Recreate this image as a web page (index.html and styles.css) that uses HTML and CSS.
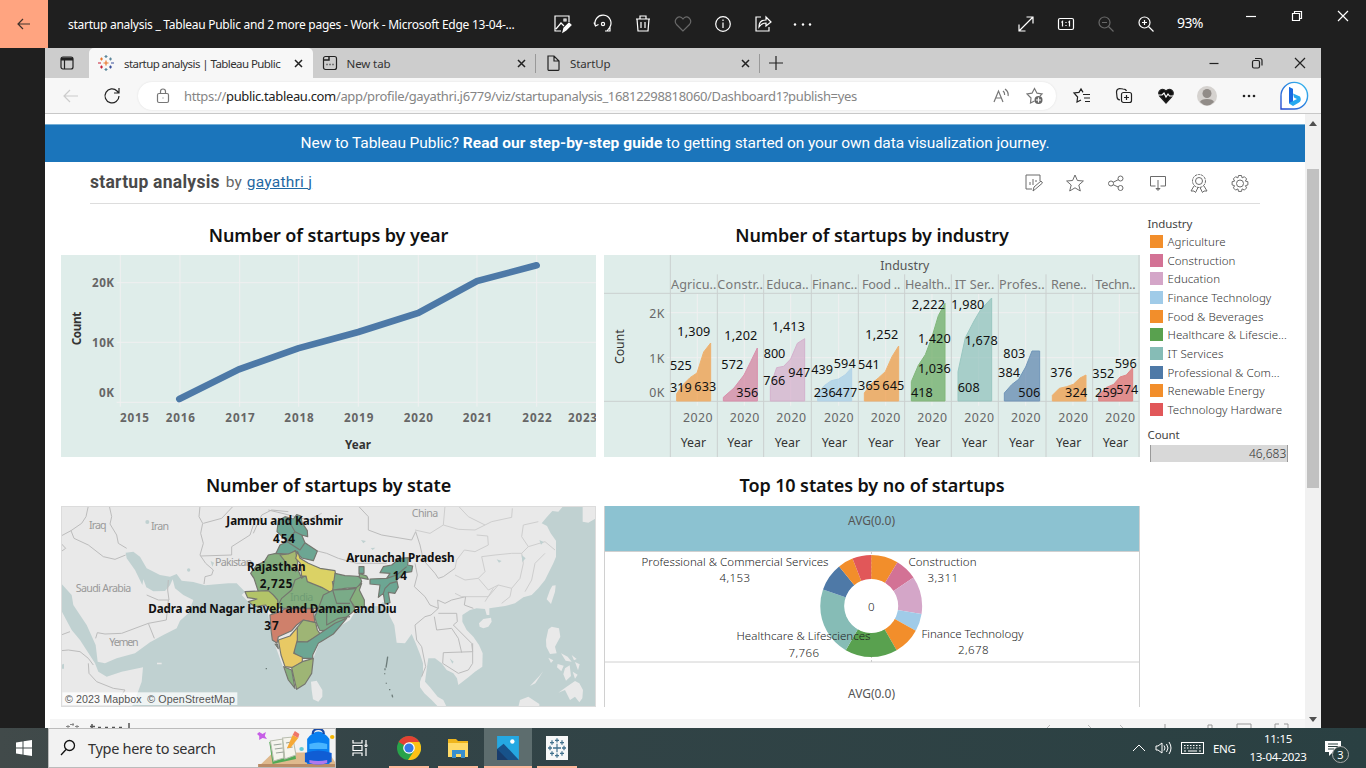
FILE: index.html
```html
<!DOCTYPE html>
<html lang="en">
<head>
<meta charset="utf-8">
<title>startup analysis</title>
<link rel="stylesheet" href="styles.css">
</head>
<body>
<header class="viewer">
  <div class="viewer-back"><svg width="14" height="12" viewBox="0 0 14 12"><path d="M13 6H1M6 1L1 6l5 5"/></svg></div>
  <div class="viewer-title">startup analysis _ Tableau Public and 2 more pages - Work - Microsoft Edge 13-04-...</div>
  <div class="viewer-tools">
    <svg viewBox="0 0 24 24"><path d="M10 19H4V4h14v6M5 17l5-6 3 3M13 7h2v2h-2z"/><path fill="#fff" d="M12 20l1-4 5-5 2 2-5 5z"/></svg>
    <svg viewBox="0 0 24 24"><circle cx="12" cy="12" r="1.600"/><path d="M4.500 14a8 8 0 1 1 14.500 1l-3 4M19 14v5h-5M3 10.500l1.500 3.500 3-1.500"/></svg>
    <svg viewBox="0 0 24 24"><path d="M5 7h14M9 7V4h6v3M6 7l1 12h10l1-12M10 10v6M14 10v6"/></svg>
    <svg class="dim" viewBox="0 0 24 24"><path d="M12 19L5.500 12.500C2 8 8 1.500 12 7c4-5.500 10 1 6.500 5.500z"/></svg>
    <svg viewBox="0 0 24 24"><circle cx="12" cy="12" r="7.300"/><path d="M12 10.500V16M12 7.500v1.500"/></svg>
    <svg viewBox="0 0 24 24"><path d="M10 5H5v14h13v-4M8 15c0-5 3-7 7-7V5l5 5-5 4v-3c-3 0-5 1-7 4z"/></svg>
    <svg class="solid" viewBox="0 0 24 24"><circle cx="4" cy="12.500" r="1.200"/><circle cx="12" cy="12.500" r="1.200"/><circle cx="19" cy="12.500" r="1.200"/></svg>
  </div>
  <div class="viewer-zoom">
    <svg viewBox="0 0 24 24"><path d="M5 19L19 5M12.500 5H19v6.500M5 12.500V19h6.500"/></svg>
    <svg viewBox="0 0 24 24"><rect x="4.500" y="6.500" width="15" height="11" rx="1.500"/><path d="M7.500 10.500l1-1v5M14.500 10.500l1-1v5M12 10v1M12 13v1"/></svg>
    <svg class="dim" viewBox="0 0 24 24"><circle cx="10.500" cy="10.500" r="5.500"/><path d="M14.500 14.500l5 5M8 10.500h5"/></svg>
    <svg viewBox="0 0 24 24"><circle cx="10.500" cy="10.500" r="5.500"/><path d="M14.500 14.500l5 5M8 10.500h5M10.500 8v5"/></svg>
  </div>
  <span class="percent">93%</span>
  <div class="viewer-win">
    <svg viewBox="0 0 12 12"><path d="M1 6.500h10"/></svg>
    <svg viewBox="0 0 12 12"><path d="M1.500 3.500h7v7h-7zM3.500 3V1.500h7v7H9"/></svg>
    <svg viewBox="0 0 12 12"><path d="M1 1l10 10M11 1L1 11"/></svg>
  </div>
</header>

<main class="shot">
  <div class="tabs">
    <div class="workspace"><svg width="14" height="14" viewBox="0 0 14 14"><rect x="1" y="1" width="12" height="12" rx="2"/><path d="M1 3h12" stroke-width="3"/><path d="M4.500 4v9"/></svg></div>
    <div class="tab active">
      <svg width="16" height="16" viewBox="0 0 16 16"><path stroke="#e8762c" d="M8 5.500v5M5.500 8h5M3.500 2.500v3M2 4h3"/><path stroke="#5b879b" d="M12.500 2.500v3M11 4h3M8 0v3M6.500 1.500h3M8 13v3M6.500 14.500h3"/><path stroke="#c72037" d="M3.500 10.500v3M2 12h3M0 8h3"/><path stroke="#384e9a" d="M12.500 10.500v3M11 12h3M13 8h3"/></svg>
      <span>startup analysis | Tableau Public</span>
      <svg class="x" width="9" height="9" viewBox="0 0 9 9"><path d="M1 1l7 7M8 1L1 8"/></svg>
    </div>
    <div class="tab">
      <svg width="16" height="16" viewBox="0 0 16 16"><rect x="1.500" y="1.500" width="13" height="13" rx="2"/><path d="M2 5h5V2M4.500 9.500h1M7.500 9.500h1M10.500 9.500h1" stroke-width="1.500"/></svg>
      <span>New tab</span>
      <svg class="x" width="9" height="9" viewBox="0 0 9 9"><path d="M1 1l7 7M8 1L1 8"/></svg>
    </div>
    <div class="tab">
      <svg width="16" height="16" viewBox="0 0 16 16"><path d="M3 1h6l5 5v8.500q0 .8-.8.800H3.600Q3 15.300 3 14.500zM9 1v5h5"/></svg>
      <span>StartUp</span>
      <svg class="x" width="9" height="9" viewBox="0 0 9 9"><path d="M1 1l7 7M8 1L1 8"/></svg>
    </div>
    <svg class="plus" width="14" height="14" viewBox="0 0 14 14"><path d="M7 0v14M0 7h14"/></svg>
    <div class="edge-win">
      <svg viewBox="0 0 12 12"><path d="M1.500 6.500h9"/></svg>
      <svg viewBox="0 0 12 12"><rect x="1.500" y="3.500" width="7" height="7.500" rx="1.500"/><path d="M4 1.500h5a2 2 0 0 1 2 2v5"/></svg>
      <svg viewBox="0 0 12 12"><path d="M1 1l10 10M11 1L1 11"/></svg>
    </div>
  </div>

  <div class="toolbar">
    <svg class="nav-back" width="16" height="16" viewBox="0 0 16 16"><path d="M15 8H1M7 2L1 8l6 6"/></svg>
    <svg class="nav-reload" width="18" height="18" viewBox="0 0 18 18"><path d="M16 9a7 7 0 1 1-2-5l2 2M16 1v5h-5"/></svg>
    <div class="address">
      <svg width="14" height="16" viewBox="0 0 14 16"><rect x="1.500" y="5.500" width="11" height="9" rx="1.500"/><path d="M4.500 5.500V3.500a2.500 2.500 0 0 1 5 0v2M6.500 10h1" /></svg>
      <span class="url">https://<b>public.tableau.com</b>/app/profile/gayathri.j6779/viz/startupanalysis_16812298818060/Dashboard1?publish=yes</span>
      <svg class="read" width="16" height="16" viewBox="0 0 16 16"><path d="M1 14L5.500 3 10 14M3 10h5M10 3q2 1.500 1.500 4M12 1q4 3 3 7"/></svg>
      <svg class="fav" width="18" height="18" viewBox="0 0 18 18"><path d="M8.500 14L4.500 16l.5-5-4-4 5-.8L8.500 1.500l2.500 4.700 5 .8-2 2"/><circle cx="12.500" cy="13" r="4" fill="#666" stroke="none"/><path stroke="#fff" d="M12.500 10.500v5M10 13h5"/></svg>
    </div>
    <div class="edge-tools">
      <svg viewBox="0 0 20 20"><path d="M9 14l-4 2 .6-5-3.600-4 5-.6L9 3l2 3.400M11 8.500h7M12 12h6M13 15.500h5"/></svg>
      <svg viewBox="0 0 20 20"><path d="M6 14q-3-.5-3-3L2.500 6q0-3 3-3.500L9 3q3 0 3.500 2"/><rect x="7.500" y="6.500" width="10" height="10" rx="2"/><path d="M12.500 9v5M10 11.500h5"/></svg>
      <svg viewBox="0 0 20 20"><path fill="#111" d="M10 17L3.500 10C1 5 6 1 10 5c4-4 9 0 6.500 5z"/><path stroke="#fff" d="M2 9h4l2-2 2 4 2-3 1.500 2H18"/></svg>
      <svg viewBox="0 0 20 20"><g stroke="none"><circle cx="10" cy="10" r="10" fill="#d5d2cf"/><circle cx="10" cy="7.500" r="4.500" fill="#918c88"/><path fill="#918c88" d="M3 16q1-3 7-3t7 3q-7 7-14 0"/></g></svg>
      <svg viewBox="0 0 20 20"><g stroke="none" fill="#222"><circle cx="5" cy="10" r="1.300"/><circle cx="10" cy="10" r="1.300"/><circle cx="15" cy="10" r="1.300"/></g></svg>
    </div>
    <svg class="bing" width="30" height="30" viewBox="0 0 30 30"><defs><linearGradient id="bg" x1="0" y1="1" x2="1" y2="0"><stop offset="0" stop-color="#2347d0"/><stop offset="1" stop-color="#37bff0"/></linearGradient></defs><path d="M2 28V15A13.300 13.300 0 1 1 15 28z" fill="#fff" stroke="url(#bg)" stroke-width="1.400"/><path d="M10 6l4 2v12l4-2-3-1.500-1-4 7 3q2 4-1 6l-6 3.500-4-2.500z" fill="#25a9f0" stroke="none"/><path d="M10 6l4 2v12l-4 2z" fill="#1a68e0" stroke="none"/></svg>
  </div>

  <div class="page">
    <div class="content">
      <div class="banner"><p>New to Tableau Public? <b>Read our step-by-step guide</b> to getting started on your own data visualization journey.</p></div>
      <div class="viz-head">
        <h1>startup analysis</h1><span class="by">by</span><a>gayathri j</a>
        <div class="viz-tools">
          <svg viewBox="0 0 24 24"><path d="M10 18H4V4h14v6M8 14v-3M11 14V8M14 11V9M11 20l1-4 7-6 1.500 2-7 6z"/></svg>
          <svg viewBox="0 0 24 24"><path d="M12 4l2.400 5.500 6 .5-4.600 4 1.500 6L12 16.800 6.700 20l1.500-6-4.600-4 6-.5z"/></svg>
          <svg viewBox="0 0 24 24"><circle cx="7" cy="12.500" r="2.500"/><circle cx="16.500" cy="7.500" r="2.500"/><circle cx="16.500" cy="17" r="2.500"/><path d="M9.200 11.300l5-2.600M9.200 13.700l5 2.300"/></svg>
          <svg viewBox="0 0 24 24"><path d="M9.500 15H4.500V5.500h15V15h-5M12 9v10M10 17.500l2 2 2-2z"/></svg>
          <svg viewBox="0 0 24 24"><circle cx="12" cy="10" r="6.500" stroke-dasharray="2.500 .7"/><circle cx="12" cy="10" r="3.500"/><path d="M7 15l-3 5h3l1.500 1.500L11 16.500M17 15l3 5h-3l-1.500 1.500L13 16.500"/></svg>
          <svg viewBox="0 0 24 24"><circle cx="12" cy="12.500" r="3.500"/><path d="M10.500 4.500h3l.6 2.400 2.300-1.200 2.200 2.200-1.200 2.200 2.500.6v3.200l-2.500.8 1.200 2.200-2.200 2.200-2.300-1.200-.6 2.500h-3l-.6-2.500-2.300 1.200-2.200-2.200 1.200-2.200-2.500-.8v-3.200l2.500-.6-1.200-2.200 2.200-2.200 2.300 1.200z"/></svg>
        </div>
      </div>

      <div class="dashboard">
        <section class="panel">
          <h2 class="t-year">Number of startups by year</h2>
          <svg class="chart" width="535" height="202" viewBox="33 120 1605 606">
            <rect x="33" y="120" width="1605" height="606" fill="#dfedea"/>
            <path class="grid" d="M200 203H1638M200 382H1638M200 562H1638M211 120V575M390 120V575M569 120V575M746 120V575M925 120V575M1105 120V575M1281 120V575M1460 120V575"/>
            <path d="M388 552L567 463L744 400L925 351L1105 294L1281 198L1460 151" fill="none" stroke="#4d79a7" stroke-width="20" stroke-linecap="round"/>
            <g class="tick bold">
              <text x="126" y="216" textLength="66">20K</text><text x="126" y="396" textLength="66">10K</text><text x="147" y="547" textLength="45">0K</text>
              <text x="210" y="620" textLength="87">2015</text><text x="347" y="620" textLength="88">2016</text><text x="526" y="620" textLength="88">2017</text><text x="703" y="620" textLength="88">2018</text><text x="882" y="620" textLength="88">2019</text><text x="1061" y="620" textLength="88">2020</text><text x="1238" y="620" textLength="88">2021</text><text x="1417" y="620" textLength="88">2022</text><text x="1554" y="620" textLength="87">2023</text>
            </g>
            <g class="axis bold"><text x="885" y="701" textLength="78">Year</text><text transform="translate(92 391) rotate(-90)" textLength="101">Count</text></g>
          </svg>
        </section>

        <section class="panel">
          <h2 class="t-industry">Number of startups by industry</h2>
          <svg class="chart" width="536" height="202" viewBox="12 120 1608 606">
            <rect x="12" y="120" width="1608" height="606" fill="#dfedea"/>
            <path class="grid" d="M200 293H1617M200 428H1617M292 237V572M433 237V572M572 237V572M716 237V572M857 237V572M996 237V572M1136 237V572M1277 237V572M1419 237V572M1558 237V572"/>
            <path class="rule" d="M12 235H1618M12 559H1618M211 120V726M352 178V726M491 178V726M634 178V726M775 178V726M914 178V726M1054 178V726M1195 178V726M1338 178V726M1478 178V726M1617 120V726"/>
            <g fill-opacity=".63" stroke-width="3">
              <path fill="#f28e2b" stroke="#eeb170" d="M230 558V536L250 508L270 488L291 474L311 411L332 384V558z"/>
              <path fill="#d37295" stroke="#d98fac" d="M370 558V547L402 519L432 480L452 440L472 399V558z"/>
              <path fill="#d4a6c8" stroke="#d4b1cd" d="M511 558V514L530 458L551 454L572 432L592 385L614 371V558z"/>
              <path fill="#a0cbe8" stroke="#b3d3e8" d="M653 558V534L674 511L694 497L716 492L736 479L755 458V558z"/>
              <path fill="#f28e2b" stroke="#eeb170" d="M793 558V534L813 507L835 489L856 470L876 425L896 393V558z"/>
              <path fill="#59a14f" stroke="#82b77b" d="M934 558V500L955 451L976 419L995 369L1015 302L1035 265V558z"/>
              <path fill="#86bcb6" stroke="#99c7c1" d="M1074 558V470L1096 368L1122 318L1142 284L1175 249V558z"/>
              <path fill="#4e79a7" stroke="#7196b9" d="M1213 558V534L1235 509L1256 493L1277 456L1296 408H1319V558z"/>
              <path fill="#f28e2b" stroke="#eeb170" d="M1357 558V541L1378 520L1400 515L1420 508L1440 489L1458 480V558z"/>
              <path fill="#e15759" stroke="#df8586" d="M1496 558V540L1518 518L1541 508L1560 486L1579 480L1598 458V558z"/>
            </g>
            <text class="axis soft" x="841" y="166" textLength="147">Industry</text>
            <g class="head">
              <text x="213" y="222" textLength="136">Agricu..</text><text x="352" y="222" textLength="137">Constr..</text><text x="499" y="222" textLength="127">Educa..</text><text x="636" y="222" textLength="136">Financ..</text><text x="786" y="222" textLength="115">Food ..</text><text x="915" y="222" textLength="137">Health..</text><text x="1064" y="222" textLength="119">IT Ser..</text><text x="1197" y="222" textLength="137">Profes..</text><text x="1353" y="222" textLength="107">Rene..</text><text x="1486" y="222" textLength="121">Techn..</text>
            </g>
            <g class="tick">
              <text x="148" y="309" textLength="45">2K</text><text x="148" y="444" textLength="45">1K</text><text x="148" y="547" textLength="45">0K</text>
              <text x="249" y="620" textLength="89">2020</text><text x="389" y="620" textLength="89">2020</text><text x="529" y="620" textLength="89">2020</text><text x="672" y="620" textLength="89">2020</text><text x="812" y="620" textLength="89">2020</text><text x="952" y="620" textLength="89">2020</text><text x="1093" y="620" textLength="89">2020</text><text x="1233" y="620" textLength="89">2020</text><text x="1375" y="620" textLength="89">2020</text><text x="1516" y="620" textLength="89">2020</text>
            </g>
            <g class="axis">
              <text transform="translate(73 447) rotate(-90)" textLength="104">Count</text>
              <text x="242" y="696" textLength="76">Year</text><text x="382" y="696" textLength="76">Year</text><text x="524" y="696" textLength="76">Year</text><text x="665" y="696" textLength="76">Year</text><text x="805" y="696" textLength="76">Year</text><text x="945" y="696" textLength="76">Year</text><text x="1085" y="696" textLength="76">Year</text><text x="1227" y="696" textLength="76">Year</text><text x="1368" y="696" textLength="76">Year</text><text x="1508" y="696" textLength="76">Year</text>
            </g>
            <g class="mark">
              <text x="232" y="362" textLength="99">1,309</text><text x="210" y="466" textLength="65">525</text><text x="210" y="530" textLength="65">319</text><text x="283" y="527" textLength="66">633</text>
              <text x="373" y="376" textLength="99">1,202</text><text x="364" y="461" textLength="66">572</text><text x="409" y="545" textLength="66">356</text>
              <text x="516" y="348" textLength="99">1,413</text><text x="491" y="430" textLength="65">800</text><text x="490" y="511" textLength="66">766</text><text x="565" y="486" textLength="66">947</text>
              <text x="634" y="477" textLength="65">439</text><text x="701" y="458" textLength="66">594</text><text x="641" y="545" textLength="66">236</text><text x="706" y="545" textLength="66">477</text>
              <text x="796" y="371" textLength="99">1,252</text><text x="774" y="463" textLength="65">541</text><text x="774" y="525" textLength="66">365</text><text x="847" y="525" textLength="66">645</text>
              <text x="935" y="282" textLength="100">2,222</text><text x="954" y="385" textLength="98">1,420</text><text x="954" y="474" textLength="98">1,036</text><text x="933" y="545" textLength="65">418</text>
              <text x="1054" y="282" textLength="99">1,980</text><text x="1094" y="391" textLength="99">1,678</text><text x="1073" y="530" textLength="66">608</text>
              <text x="1210" y="430" textLength="66">803</text><text x="1194" y="485" textLength="66">384</text><text x="1255" y="545" textLength="66">506</text>
              <text x="1351" y="486" textLength="66">376</text><text x="1395" y="545" textLength="67">324</text>
              <text x="1544" y="458" textLength="66">596</text><text x="1477" y="489" textLength="66">352</text><text x="1485" y="545" textLength="66">259</text><text x="1549" y="536" textLength="66">574</text>
            </g>
          </svg>
        </section>

        <aside class="legend">
          <h3>Industry</h3>
          <ul>
            <li><i class="c-or"></i><span>Agriculture</span></li>
            <li><i class="c-pk"></i><span>Construction</span></li>
            <li><i class="c-li"></i><span>Education</span></li>
            <li><i class="c-sk"></i><span>Finance Technology</span></li>
            <li><i class="c-or"></i><span>Food &amp; Beverages</span></li>
            <li><i class="c-gr"></i><span>Healthcare &amp; Lifescie...</span></li>
            <li><i class="c-te"></i><span>IT Services</span></li>
            <li><i class="c-bl"></i><span>Professional &amp; Com...</span></li>
            <li><i class="c-or"></i><span>Renewable Energy</span></li>
            <li><i class="c-rd"></i><span>Technology Hardware</span></li>
          </ul>
          <h3>Count</h3>
          <div class="count-bar">46,683</div>
        </aside>

        <section class="panel">
          <h2 class="t-state">Number of startups by state</h2>
          <svg class="chart" width="535" height="201" viewBox="18 18 1605 603">
            <rect x="18" y="18" width="1605" height="603" fill="#c0d1d1"/>
            <g fill="#e9e9e9">
              <path d="M18 18H1525L1510 35L1492 33L1475 52L1460 70L1476 78L1487 100L1503 122V150L1503 170L1495 190L1480 220L1470 240L1450 265L1430 285L1405 292L1380 310L1350 318L1303 325V345H1295L1290 327L1265 325L1245 330L1222 345V365L1235 390L1255 410L1272 435L1283 460L1282 500L1260 515L1240 532L1210 555L1206 535L1195 520L1175 510L1160 490L1140 475L1120 475L1116 500L1110 545L1125 562L1148 590L1165 600L1175 621H1150L1130 600L1108 580L1095 562V545L1104 520V490L1096 465L1082 430L1070 402L1050 430L1025 428L1018 375L1005 350L985 305L970 318L928 320L900 335L885 360L840 388L810 415L790 435L775 475L770 520L750 552L725 568L700 540L680 490L660 435L648 400L640 345L632 315L605 320L580 305L560 285L570 275L545 250L520 250L450 256L415 246L380 242L365 222L345 230L315 225L275 205L255 170L235 155L212 158L215 175L240 210L262 255L265 238L274 262L295 274L330 273L345 256L353 238L360 265L385 285L415 300L400 340L375 362L365 385L325 405L285 427L240 460L185 475L150 490L128 485L122 435L95 375L55 315L50 285L18 250z"/>
              <path d="M18 330L50 390L75 420L120 490L130 515L155 530L200 515L264 502L260 545L240 600L230 621H18zM1583 18V65L1600 68L1623 55V18zM768 545L785 542L802 570V590L790 605L774 598L770 570zM1272 370L1285 357L1308 353L1310 365L1300 380L1285 385L1274 380zM1485 270L1492 257L1502 256L1500 275L1488 312L1475 298zM1480 388L1490 380L1512 385L1516 410L1500 440L1505 460L1485 462L1474 440L1473 420zM1510 578L1535 560L1560 543L1573 550L1584 570L1582 595L1573 607L1560 590L1545 600L1530 570zM1390 621L1395 600L1420 590L1453 612V621z"/>
              <path d="M1518 460l20 10 12 15-18-3zM1550 465l15 12-8 4zM1508 492l18 5-7 17-13-12zM1530 505l14-9 4 32-15 14-8-19zM1560 486l14 7-5 18zM1553 515l15 9-8 12zM1425 558l28-30 12-15-24 37zM1480 473l15 8-7 8zM306 488h14v5h-14z"/>
            </g>
            <g fill="none" stroke="#bcbcbc" stroke-width="3">
              <path d="M100 18L93 50L80 70L48 92L18 108M48 92L57 115L100 135L145 170L180 178L212 165M163 18L170 50L165 72L185 105L190 130L215 145M435 18L432 50L443 70L437 100L445 130L435 165L452 190L475 210L470 225L450 230L447 252M437 168L530 165L530 140L585 105L600 60M445 70L500 55L535 18M340 240L338 270L342 300L310 300L275 285M340 300L334 360L280 370L200 400L150 402L127 398L122 415M280 370L298 415M18 155L32 145L18 130M18 405L45 395M18 452L40 450L75 455L100 475L115 495M100 490L102 520L125 545L175 565L210 570L190 600L230 612M700 35L650 30L620 45L595 100M787 153L815 160L850 175L905 190L995 190M640 30L690 42L760 60L800 40M910 18L940 50V90L980 105L1070 120L1082 95L1095 135L1105 180L1140 220L1150 235L1165 230L1200 205M1080 190L1087 225L1078 260L1110 290L1125 315L1150 325L1128 345L1110 350L1080 375L1085 420L1100 440L1112 500L1100 530M1150 325L1148 300L1170 310L1190 300L1232 290L1228 315L1255 325M1150 340L1205 340L1207 365L1195 375L1250 430L1253 455L1165 458L1163 490L1210 520L1240 510L1253 490V430M1138 350L1145 390L1190 385L1210 415L1220 458"/>
              <path stroke="#cecece" d="M1080 90L1125 100L1165 75L1170 18M1165 75L1210 88L1260 90L1290 75L1240 50L1210 18M1290 75L1310 65L1370 52L1372 25M1200 205L1205 180L1228 150L1260 155L1300 135L1298 108L1265 105M1280 170L1320 165L1370 160L1400 160L1405 190L1395 235L1370 265L1330 255L1300 270L1270 235L1290 215L1280 170M1200 225L1230 240L1270 235M1200 280L1220 290L1300 290L1330 255M1290 305L1315 265M1370 265L1365 290L1340 310M1400 160L1420 140L1400 110L1405 75L1450 65M1420 140L1470 125L1500 150M1470 160L1440 190L1430 240L1410 275"/>
            </g>
            <g fill="#c0d1d1"><circle cx="277" cy="66" r="6"/><circle cx="401" cy="210" r="5"/><path d="M467 183l10 5-5 12zM918 120l15 3-8 7zM947 144l14-1-8 7zM1325 178l15 5-8 5zM1400 165l12 10-10 11zM1453 120l13 6-8 8zM18 495l9-4v15H18zM1184 475l12 10-4 6z"/></g>
            <g class="place"><text x="102" y="88" textLength="53">Iraq</text><text x="288" y="90" textLength="54">Iran</text><text x="480" y="198" textLength="112">Pakistan</text><text x="62" y="275" textLength="167">Saudi Arabia</text><text x="163" y="437" textLength="88">Yemen</text><text x="1070" y="52" textLength="80">China</text></g>
            <g stroke="#75766f" stroke-width="3.500" stroke-linejoin="round">
              <path fill="#6ca693" d="M670 62L690 50L715 57L725 44L738 48L741 68L757 92L758 110L740 105L750 128L760 135L787 153L775 182L740 174L720 152L705 162L663 160L675 135L697 125L666 95z"/>
              <path fill="none" d="M697 125L720 95L740 105M720 95L700 60M697 125L735 150L750 128"/>
              <path fill="#84ae7e" d="M663 160L695 165L700 190L725 200L740 235L752 225L757 240L800 262L835 270L815 285L795 325H690L640 320L610 275L597 235L587 220L605 195L628 185L640 165z"/>
              <path fill="#a4b871" d="M675 165L700 162L722 152L728 190L722 215L695 190z"/>
              <path fill="none" d="M752 225L720 240L710 270L680 295L665 325"/>
              <path fill="#dbd265" d="M728 155L735 175L760 190L795 205L840 212L844 240L832 245L837 268L826 277L800 262L757 245L753 228L740 228L736 190L722 175z"/>
              <path fill="#b3c468" d="M570 275L640 272L655 285L668 300L670 325L655 345L632 315L600 320L580 305L606 297L578 293z"/>
              <path fill="#7aab88" d="M840 220L870 227L895 228L915 230L920 245L908 262L870 265L833 270zM805 285L835 270L880 268L905 265L888 300L900 330L870 355L830 390L795 392L785 370L779 350L790 325z"/>
              <path fill="none" d="M833 270L845 310L885 310M798 320L815 330V375L850 355L885 350"/>
              <path fill="#86af7d" d="M905 262L920 250L913 270L928 300L928 320L900 322L885 300z"/>
              <path fill="#cf806b" d="M645 345L675 335L690 326H776L777 348L780 368L745 360L725 375L710 392L670 410L666 430L652 420L648 390z"/>
              <path fill="#9eb575" d="M745 360L782 368L787 390L797 404L755 426L726 425L727 382z"/>
              <path fill="#6ca693" d="M719 425L757 426L840 370L875 355L835 402L790 430L773 465V475L740 475L718 460z"/>
              <path fill="#e8c964" d="M670 420L705 408L727 382V420L716 460L742 472V485L715 503L690 500L678 465z"/>
              <path fill="#9eb575" d="M742 485L775 475L770 520L750 552L725 568L716 530L710 503z"/>
              <path fill="#86af7d" d="M686 500L710 510L720 565L700 540zM913 220l22 8 5 10-27-5z"/>
              <path fill="#6ca693" d="M912 200h15v20h-15zM975 218L985 200L1010 195L1035 175L1060 173L1058 195L1073 198L1070 215L1050 218L1025 240L1030 262L1020 280L1000 277L1005 308L990 312L985 280L970 292L975 255L945 252V237L995 235L1005 220z"/>
              <path fill="none" d="M995 235L1025 225L1055 200M985 280L990 265L1005 250L1025 245"/>
              <path fill="#6ca693" d="M660 432l8 2 2 12z"/>
            </g>
            <g fill="none" stroke="#6d7c7a" stroke-width="4"><path d="M998 470l-2 14-3 19M990 505v6M989 520v3M994 548v3M1004 567v4M1011 584l2 8M632 506h4"/></g>
            <text class="place india" x="705" y="302" textLength="70">India</text>
            <g class="mark bold">
              <text x="514" y="75" textLength="350">Jammu and Kashmir</text><text x="654" y="128" textLength="66">454</text>
              <text x="576" y="212" textLength="176">Rajasthan</text><text x="614" y="264" textLength="98">2,725</text>
              <text x="280" y="338" textLength="745">Dadra and Nagar Haveli and Daman and Diu</text><text x="628" y="391" textLength="43">37</text>
              <text x="874" y="187" textLength="325">Arunachal Pradesh</text><text x="1013" y="240" textLength="43">14</text>
            </g>
            <rect x="22" y="577" width="525" height="38" fill="#fff" fill-opacity=".75"/>
            <text class="credit" x="30" y="608" textLength="230">© 2023 Mapbox</text><text class="credit" x="277" y="608" textLength="263">© OpenStreetMap</text>
            <rect x="19.500" y="19.500" width="1602" height="600" fill="none" stroke="#dcdcdc" stroke-width="3"/>
          </svg>
        </section>

        <section class="panel">
          <h2 class="t-top">Top 10 states by no of startups</h2>
          <svg class="chart" width="536" height="201" viewBox="604 506 536 201">
            <rect x="604" y="506" width="536" height="45" fill="#8cc2d1"/>
            <path d="M604 551.500h536M604 662h536M604.500 506v201M1139.500 506v201" stroke="#d0d0d0" fill="none"/>
            <path d="M871.500 552v110" stroke="#ccc" stroke-dasharray="2 2"/>
            <g transform="rotate(-90 871.200 606)" fill="none" stroke-width="24.500">
              <circle class="arc" stroke="#f28e2b" pathLength="360" stroke-dasharray="31 329"/>
              <circle class="arc" stroke="#d37295" pathLength="360" stroke-dasharray="25 335" stroke-dashoffset="-31"/>
              <circle class="arc" stroke="#d4a6c8" pathLength="360" stroke-dasharray="43 317" stroke-dashoffset="-56"/>
              <circle class="arc" stroke="#a0cbe8" pathLength="360" stroke-dasharray="20 340" stroke-dashoffset="-99"/>
              <circle class="arc" stroke="#f28e2b" pathLength="360" stroke-dasharray="31 329" stroke-dashoffset="-119"/>
              <circle class="arc" stroke="#59a14f" pathLength="360" stroke-dasharray="60 300" stroke-dashoffset="-150"/>
              <circle class="arc" stroke="#86bcb6" pathLength="360" stroke-dasharray="79 281" stroke-dashoffset="-210"/>
              <circle class="arc" stroke="#4e79a7" pathLength="360" stroke-dasharray="32 328" stroke-dashoffset="-289"/>
              <circle class="arc" stroke="#f28e2b" pathLength="360" stroke-dasharray="17.500 342.500" stroke-dashoffset="-321"/>
              <circle class="arc" stroke="#e15759" pathLength="360" stroke-dasharray="21.500 338.500" stroke-dashoffset="-338.500"/>
            </g>
            <circle cx="871.200" cy="606" r="27" fill="#fff"/>
            <g class="avg"><text x="848" y="524.500" textLength="47">AVG(0.0)</text><text x="848" y="698" textLength="47">AVG(0.0)</text></g>
            <g class="pie">
              <text x="641.500" y="565.500" textLength="187">Professional &amp; Commercial Services</text><text x="719.500" y="582" textLength="30.500">4,153</text>
              <text x="908.500" y="565.500" textLength="68">Construction</text><text x="927.500" y="582" textLength="30.500">3,311</text>
              <text x="921.500" y="637.500" textLength="102">Finance Technology</text><text x="958" y="654" textLength="30.500">2,678</text>
              <text x="736.500" y="640" textLength="134">Healthcare &amp; Lifesciences</text><text x="788.500" y="657" textLength="30.500">7,766</text>
              <text x="868" y="611">0</text>
            </g>
          </svg>
        </section>
      </div>
      <div class="viz-foot">
        <svg width="1255" height="9" viewBox="50 719 1255 9" fill="none"><path stroke="#888" d="M66 726.500h4M70 724.500h4M75 726.500h4M68 725v3M73 723v3M77 725v3"/><path stroke="#555" stroke-width="1.500" d="M92 724v4M90 726.500h5M98 727.500h3M105 727.500h3M112 727.500h3M119 727.500h3M129 723v5"/><path stroke="#bbb" d="M1047 728l3-3M1091 728l-3-3M1120 725l3 3"/><path stroke="#999" d="M1165 724v4M1208 728v-3h4v3M1237 728v-4h14v4M1275 728v-4h4M1284 724h4v4"/></svg>
      </div>
    </div>
    <div class="scroll">
      <svg width="8" height="5" viewBox="0 0 8 5"><path d="M0 5l4-5 4 5z"/></svg>
      <div class="thumb"></div>
      <svg width="8" height="5" viewBox="0 0 8 5"><path d="M0 0l4 5 4-5z"/></svg>
    </div>
  </div>
</main>

<footer class="taskbar">
  <div class="start"><svg width="16" height="16" viewBox="0 0 16 16" fill="#fff"><path d="M0 2.500l6.500-1v6H0zM7.500 1.300L16 0v7.500H7.500zM0 8.500h6.500v6l-6.500-1zM7.500 8.500H16V16l-8.500-1.300z"/></svg></div>
  <div class="search">
    <svg width="16" height="18" viewBox="0 0 16 18"><circle cx="9.500" cy="6.500" r="5"/><path d="M6 10.500L1 16"/></svg>
    <span>Type here to search</span>
    <svg class="art" width="78" height="38" viewBox="223 729 70 38" preserveAspectRatio="none"><path d="M224 767l13-14 50-1 6 10v5z" fill="#dfb98d"/><path d="M224 764h69v4h-69z" fill="#b98c66"/><path d="M234 742l11-2 10-1 3 20-21 5z" fill="#51aa55"/><path d="M235 741l11-2 1 19-9 3zM246 738l9-1 3 18-10 4z" fill="#f5f4ed" stroke="#b8bdae"/><path d="M238 745l7-1M239 749l7-1M240 753l7-1M249 743l5-1M250 748l5-1" stroke="#9ba39a"/><path d="M250 748l5-13 5 3-7 10z" fill="#f5a936"/><path d="M255 735l2-4 4 3-1 4z" fill="#ef7668"/><path d="M225 732l3 2 3-2-1 4 2 3-4-1-3 2v-4l-2-2z" fill="#c65ee6"/><path d="M268 764V739q10-15 20 0v25z" fill="#087ff0"/><path d="M266 753q12-5 24 0v9q-12 5-24 0z" fill="#105dd4"/><path d="M270 744q8-3 16 0v5h-16z" fill="#49b5ff"/><path d="M270 760q8 2 16 0v3q-8 3-16 0z" fill="#af78ef"/><path d="M273 734q0-5 5-5t5 5" stroke="#1949a5" stroke-width="2" fill="none"/><circle cx="263" cy="749" r="2" fill="#61cbd5"/><circle cx="290.500" cy="737" r="2" fill="#f6b600"/></svg>
  </div>
  <div class="apps">
    <div class="app plain"><svg width="16" height="16" viewBox="0 0 16 16" fill="none" stroke="#fff" stroke-width="1.200"><path d="M1 0v3h9V0M1 16v-3h9v3M1 5.500h9v5H1zM14 0v4M14 8v8"/><circle cx="14" cy="5.500" r="1"/></svg></div>
    <div class="app"><svg width="24" height="24" viewBox="0 0 24 24"><circle cx="12" cy="12" r="12" fill="#28a34a"/><path d="M12 12L1.600 6A12 12 0 0 1 22.400 6z" fill="#e34133"/><path d="M12 6h10.400A12 12 0 0 1 11 24l6-9z" fill="#fbc116"/><circle cx="12" cy="12" r="5.800" fill="#fff"/><circle cx="12" cy="12" r="4.600" fill="#3579e6"/></svg></div>
    <div class="app"><svg width="22" height="22" viewBox="0 0 22 22"><path d="M1 2h8l2 2h10v16H1z" fill="#efb51c"/><path d="M1 6h20v14H1z" fill="#ffda68"/><path d="M5 13h13v8h-4v-4H9v4H5z" fill="#398fce"/></svg></div>
    <div class="app current"><svg width="22" height="24" viewBox="0 0 20 22"><path fill="#25a8e2" d="M0 0h20v22H0z"/><path fill="#17528a" d="M0 12l6-5 14 15H0z"/><path fill="#183c6c" d="M0 22V12l10 10z"/><circle cx="14" cy="5" r="2" fill="#fff"/></svg></div>
    <div class="app"><svg width="22" height="24" viewBox="0 0 22 22" preserveAspectRatio="none" fill="none" stroke-width="1.200"><path fill="#f7f8f8" d="M0 0h22v22H0z"/><path stroke="#41718d" d="M11 7v8M7 11h8M11 2v4M9 4h4M11 16v4M9 18h4M2 11h4M4 9v4M16 11h4M18 9v4M6 4v4M4 6h4M16 4v4M14 6h4M6 14v4M4 16h4M16 14v4M14 16h4"/></svg></div>
  </div>
  <div class="tray">
    <svg width="14" height="8" viewBox="0 0 14 8"><path d="M1 7l6-6 6 6"/></svg>
    <svg width="17" height="14" viewBox="0 0 17 14"><path d="M1 5h2l4-3v10L3 9H1zM9 4.500q2 2.500 0 5M11.500 3q3 4 0 8M14 1q4 6 0 12"/></svg>
    <svg width="23" height="14" viewBox="0 0 23 14"><rect x=".5" y="1.500" width="22" height="11"/><path stroke-dasharray="1.500 1.500" d="M3 4.500h17M3 7h17"/><path d="M3 10h2M7 10h9M18 10h2"/></svg>
    <span class="lang">ENG</span>
    <div class="clock"><span>11:15</span><span>13-04-2023</span></div>
    <div class="notice"><svg width="17" height="16" viewBox="0 0 17 16"><path fill="#fff" d="M0 1h16v11H8l-4 4v-4H0z"/><path stroke="#29403f" d="M3 4h10M3 6.500h10M3 9h6"/></svg><i>3</i></div>
  </div>
</footer>
</body>
</html>
```
FILE: styles.css
```css
* { box-sizing: border-box; }
body { margin: 0; width: 1366px; height: 768px; overflow: hidden; background: #1f1f1f; font-family: "Noto Sans", "Open Sans", sans-serif; display: flex; flex-direction: column; }
svg { display: block; flex: none; }
h1, h2, h3, p, ul { margin: 0; padding: 0; }
span, p, h1, h2, h3, a { white-space: nowrap; }

/* photo viewer bar */
.viewer { height: 48px; display: flex; color: #fff; flex: none; }
.viewer svg { fill: none; stroke: #fff; stroke-width: 1.2; }
.viewer-back { width: 48px; background: #ffa480; display: flex; align-items: center; justify-content: center; }
.viewer-back svg { stroke: #40322b; }
.viewer-title { width: 483px; padding-left: 20px; font-size: 12px; line-height: 49px; letter-spacing: -.26px; white-space: nowrap; }
.viewer-tools { display: flex; gap: 16px; align-items: center; margin-left: 20px; }
.viewer-tools svg, .viewer-zoom svg { width: 24px; height: 24px; }
.viewer .dim { stroke: #686868; }
.viewer .solid { fill: #fff; stroke: none; }
.viewer-zoom { display: flex; gap: 16px; align-items: center; margin-left: 199px; }
.percent { font-size: 14px; line-height: 46px; margin-left: 19px; width: 68px; letter-spacing: -.6px; }
.viewer-win { display: flex; gap: 34px; padding-top: 10px; }
.viewer-win svg { width: 12px; height: 12px; }

/* browser window */
.shot { width: 1276px; height: 680px; margin-left: 45px; background: #fff; display: flex; flex-direction: column; flex: none; }
.tabs { height: 30px; background: #cdcdcd; display: flex; align-items: center; }
.tabs svg { fill: none; stroke: #222; stroke-width: 1.2; }
.workspace { width: 44px; display: flex; justify-content: center; }
.tab { width: 223.500px; height: 30px; display: flex; align-items: center; padding: 0 9px; font-size: 11.500px; color: #333; }
.tab span { margin-left: 9px; letter-spacing: -.1px; }
.tab:not(.active) { border-right: 1px solid #999; height: 19px; }
.tab.active { background: #f7f7f7; border-radius: 5px 5px 0 0; padding-right: 10px; }
.tab.active span { letter-spacing: -.57px; margin-left: 10px; }
.tab .x { margin-left: auto; stroke-width: 1.500; }
.plus { margin-left: 9px; }
.edge-win { display: flex; gap: 31px; margin-left: auto; margin-right: 15px; }
.edge-win svg { width: 12px; height: 12px; }
.toolbar { height: 36px; background: #f7f7f7; border-bottom: 1px solid #c8c8c8; display: flex; align-items: center; flex: none; }
.toolbar svg { fill: none; stroke: #222; stroke-width: 1.2; }
.nav-back { margin-left: 18px; }
.toolbar .nav-back { stroke: #ccc; }
.nav-reload { margin-left: 24px; }
.address { width: 918px; height: 28px; border-radius: 14px; background: #fff; margin-left: 17px; display: flex; align-items: center; padding: 0 12px 0 18px; box-shadow: 0 0 2px #ddd; }
.toolbar .address svg { stroke: #777; }
.url { margin-left: 14px; font-size: 13px; color: #858585; letter-spacing: -.35px; }
.url b { font-weight: 400; color: #222; }
.read { margin-left: auto; }
.fav { margin-left: 17px; }
.edge-tools { display: flex; gap: 21.800px; margin-left: 16px; }
.edge-tools svg { width: 20px; height: 20px; }
.bing { margin-left: 20px; }

/* web page */
.page { flex: 1; display: flex; min-height: 0; }
.content { width: 1260px; padding-top: 10px; display: flex; flex-direction: column; }
.banner { height: 38px; background: #1b75bb; border-top: 1px solid #75afd6; color: #fff; text-align: center; flex: none; }
.banner p { font: 15.500px/36px Roboto, sans-serif; letter-spacing: -.09px; }
.banner b { letter-spacing: .06px; }
.viz-head { height: 42px; margin: 0 45px; border-bottom: 1px solid #ddd; display: flex; align-items: center; font-family: Roboto, sans-serif; font-size: 15.500px; color: #666; flex: none; }
.viz-head h1 { font-size: 17.500px; color: #4a4a4a; letter-spacing: .26px; }
.viz-head h1, .viz-head span, .viz-head a { padding-bottom: 2px; }
.by { margin: 0 5px 0 6px; }
.viz-head a { color: #1f69a3; text-decoration: underline; letter-spacing: .25px; }
.viz-tools { display: flex; gap: 17.200px; margin-left: auto; margin-right: 8px; }
.viz-tools svg { width: 24px; height: 24px; fill: none; stroke: #6b6b6b; }
.dashboard { display: grid; grid-template-columns: 535px 536px 142px; grid-template-rows: 253px 250px; column-gap: 8px; padding-left: 16px; }
.panel h2 { height: 51px; font: 600 18px/62px "Noto Sans", sans-serif; letter-spacing: -.1px; text-align: center; color: #111; }
.panel:nth-of-type(n+3) h2 { height: 49px; line-height: 56px; }
.chart { overflow: hidden; font-family: "Noto Sans", sans-serif; }
.grid { stroke: #f0f0f0; stroke-width: 3; fill: none; }
.rule { stroke: #cbd0cf; stroke-width: 3; fill: none; }
.tick { fill: #666; font-size: 37px; }
.axis { fill: #333; font-size: 37px; }
.soft { fill: #555; }
.head { fill: #777; font-size: 38px; }
.mark { fill: #111; font-size: 38px; }
.bold { font-weight: 700; font-size: 35px; }
.place { fill: #999; font-size: 32px; }
.india { fill: #6f9c75; }
.credit { fill: #555; font: 32px "Liberation Sans", sans-serif; }
.avg { fill: #555; font-size: 12px; }
.pie { fill: #222; font-size: 11.500px; font-weight: 300; }
.arc { cx: 871.2px; cy: 606px; r: 38.7px; }
.legend { padding: 11px 0 0 0; color: #333; margin-left: -.5px; }
.legend h3 { font: 400 11.500px/17px "Noto Sans", sans-serif; color: #444; letter-spacing: -.1px; }
.legend ul { list-style: none; }
.legend li { height: 18.700px; display: flex; align-items: center; font-size: 11.500px; font-weight: 300; letter-spacing: .07px; }
.legend i { width: 13px; height: 13px; margin: 0 5px 0 2px; }
.c-or { background: #f28e2b; } .c-pk { background: #d37295; } .c-li { background: #d4a6c8; } .c-sk { background: #a0cbe8; } .c-gr { background: #59a14f; } .c-te { background: #86bcb6; } .c-bl { background: #4e79a7; } .c-rd { background: #e15759; }
.legend ul + h3 { margin-top: 7px; }
.count-bar { height: 17px; width: 138px; margin: 2px 0 0 2px; background: #d8d8d8; border: solid #999; border-width: 0 1px; font-size: 12px; font-weight: 300; line-height: 17px; text-align: right; letter-spacing: .1px; }
.viz-foot { height: 9px; margin: 12px 0 0 5px; background: #f5f5f5; }
.scroll { width: 16px; background: #f1f1f1; display: flex; flex-direction: column; align-items: center; padding: 7px 0 6px; }
.scroll svg { fill: #505050; }
.thumb { width: 12px; height: 319px; margin: 43px 0 auto; background: #c1c1c1; }

/* taskbar */
.taskbar { height: 40px; background: linear-gradient(90deg, #414a4a 0, #334447 30%, #2a4042 100%); display: flex; color: #fff; flex: none; }
.start { width: 48px; display: flex; align-items: center; justify-content: center; }
.search { width: 288px; background: #f2f2f2; border: 1px solid #bbb; display: flex; align-items: center; padding-left: 11px; color: #333; font-size: 14.500px; }
.search > svg:first-child { fill: none; stroke: #111; stroke-width: 1.3; }
.search span { margin-left: 12px; letter-spacing: -.3px; }
.search .art { margin-left: auto; }
.apps { display: flex; gap: 1.200px; }
.app { width: 48px; display: flex; align-items: center; justify-content: center; background: linear-gradient(#ffb99c, #ffb99c) bottom / 40px 2px no-repeat; }
.app.plain { background: none; }
.app.current { background: linear-gradient(#ffb99c, #ffb99c) bottom / 48px 2px no-repeat #5d6d6e; }
.tray { display: flex; align-items: center; margin-left: auto; font-size: 11.500px; width: 234px; }
.tray > svg { fill: none; stroke: #fff; margin-right: 9px; }
.lang { width: 35px; letter-spacing: -.3px; }
.clock { width: 62px; display: flex; flex-direction: column; align-items: center; line-height: 18px; letter-spacing: -.3px; margin-left: -1px; }
.notice { position: relative; margin-left: 16px; }
.notice i { position: absolute; left: 7px; top: 6px; width: 17px; height: 17px; border-radius: 50%; border: 1px solid #aaa; background: #29403f; font: 11px/15px "Noto Sans", sans-serif; text-align: center; }
```
